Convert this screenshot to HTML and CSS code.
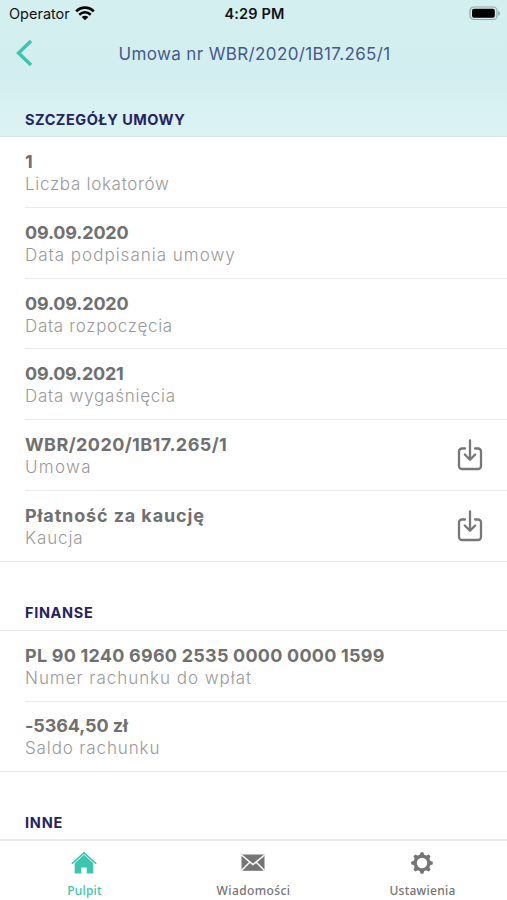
FILE: index.html
```html
<!DOCTYPE html>
<html lang="pl">
<head>
<meta charset="utf-8">
<title>Umowa</title>
<link rel="stylesheet" href="styles.css">
</head>
<body>
<div class="app">
  <header class="top">
    <div class="status">
      <div class="carrier"><span class="operator">Operator</span>
        <svg class="wifi" width="20" height="15" viewBox="0 0 20 15" fill="none" stroke="#000" stroke-width="2.6"><path d="M1.2 5.4C6.2.4 13.800.4 18.800 5.400M4.300 8.700C7.600 5.500 12.400 5.500 15.700 8.700"/><path d="M10 14.200 6.700 11C8.600 9.300 11.400 9.300 13.300 11Z" fill="#000" stroke="none"/></svg>
      </div>
      <span class="time">4:29 PM</span>
      <svg class="battery" width="31" height="15" viewBox="0 0 31 15"><rect x="1" y="1" width="27" height="12.500" rx="3.800" fill="none" stroke="#93a8a8" stroke-width="1.200"/><rect x="3" y="2.800" width="22.800" height="9" rx="2" fill="#000"/><path d="M29.300 5v4.800c2-.7 2-4.100 0-4.800Z" fill="#84999a"/></svg>
    </div>
    <div class="nav">
      <svg class="back" width="18" height="28" viewBox="0 0 18 28" fill="none" stroke="#3cc6ae" stroke-width="3.400"><path d="M15 2 2.500 14 15 26"/></svg>
      <h1><span class="title">Umowa nr WBR/2020/1B17.265/1</span></h1>
    </div>
    <h2><span class="s1">SZCZEGÓŁY UMOWY</span></h2>
  </header>
  <main>
    <section class="list">
      <div class="row"><div><b class="v1">1</b><p class="l1">Liczba lokatorów</p></div></div>
      <div class="row"><div><b class="date">09.09.2020</b><p class="l2">Data podpisania umowy</p></div></div>
      <div class="row"><div><b class="date">09.09.2020</b><p class="l3">Data rozpoczęcia</p></div></div>
      <div class="row"><div><b class="date last-date">09.09.2021</b><p class="l4">Data wygaśnięcia</p></div></div>
      <div class="row"><div><b class="v5">WBR/2020/1B17.265/1</b><p class="l5">Umowa</p></div>
        <svg class="save" width="26" height="32" viewBox="0 0 26 32" fill="none" stroke="#777" stroke-width="2.300" stroke-linecap="round" stroke-linejoin="round"><path d="M8 9.500H5a3 3 0 0 0-3 3V27a3 3 0 0 0 3 3h16a3 3 0 0 0 3-3V12.500a3 3 0 0 0-3-3h-3M13 1.500v19M7.800 15.500l5.200 5.300 5.200-5.300"/></svg></div>
      <div class="row"><div><b class="v6">Płatność za kaucję</b><p class="l6">Kaucja</p></div>
        <svg class="save" width="26" height="32" viewBox="0 0 26 32" fill="none" stroke="#777" stroke-width="2.300" stroke-linecap="round" stroke-linejoin="round"><path d="M8 9.500H5a3 3 0 0 0-3 3V27a3 3 0 0 0 3 3h16a3 3 0 0 0 3-3V12.500a3 3 0 0 0-3-3h-3M13 1.500v19M7.800 15.500l5.200 5.300 5.200-5.300"/></svg></div>
    </section>
    <h2 class="mid"><span class="s2">FINANSE</span></h2>
    <section class="list">
      <div class="row"><div><b class="v7">PL 90 1240 6960 2535 0000 0000 1599</b><p class="l7">Numer rachunku do wpłat</p></div></div>
      <div class="row"><div><b class="v8">-5364,50 zł</b><p class="l8">Saldo rachunku</p></div></div>
    </section>
    <h2 class="end"><span class="s3">INNE</span></h2>
  </main>
  <nav class="tabs">
    <div class="tab active">
      <svg width="26" height="24" viewBox="0 0 26 24" fill="currentColor"><path d="M13 .8.300 12.200 1.500 13.300 13 3l11.500 10.300 1.200-1.100Z"/><path d="m13 3.800 9.300 8.500v10.100h-6.600v-6h-5.400v6H3.700V12.300Z"/></svg>
      <span class="t1">Pulpit</span>
    </div>
    <div class="tab">
      <svg width="26" height="24" viewBox="0 0 26 24"><path d="M1.500 3.500h23v16.300h-23Z" fill="#757575"/><path d="m1.500 4 11.500 9.500L24.500 4M1.500 19.500l8.200-8.200m14.800 8.200-8.200-8.200" fill="none" stroke="#fff" stroke-width="1.500"/></svg>
      <span class="t2">Wiadomości</span>
    </div>
    <div class="tab">
      <svg width="26" height="24" viewBox="-13 -12 26 24"><g fill="#757575"><path id="t" d="M-2.300-8-1.300-10.800h2.600L2.300-8V8L1.300 10.800h-2.600L-2.300 8Z"/><use href="#t" transform="rotate(45)"/><use href="#t" transform="rotate(90)"/><use href="#t" transform="rotate(135)"/><circle r="8.500"/></g><circle r="5.200" fill="#fff"/></svg>
      <span class="t3">Ustawienia</span>
    </div>
  </nav>
</div>
</body>
</html>
```
FILE: styles.css
```css
* { box-sizing: border-box; }
body { margin: 0; background: #fff; font-family: Inter, "Open Sans", sans-serif; }
.app { width: 507px; height: 900px; display: flex; flex-direction: column; overflow: hidden; }
h1, h2, p { margin: 0; font-size: inherit; }
svg { display: block; flex: none; }

.top { height: 137px; display: flex; flex-direction: column; background: linear-gradient(#d4efef 0, #d3eef0 55%, #dcf3f3 100%); border-bottom: 1px solid #dce5e5; }
.status { height: 28px; display: grid; grid-template-columns: 1fr auto 1fr; align-items: center; padding: 0 7px 2px 9px; color: #111; }
.carrier { display: flex; align-items: center; gap: 5px; }
.operator { font-size: 14.500px; }
.time { font-size: 14.500px; font-weight: 600; letter-spacing: .15px; }
.battery { justify-self: end; }
.nav { height: 52px; display: grid; grid-template-columns: 40px 1fr 40px; align-items: center; padding: 0 14px 2px 16px; }
h1 { font-size: 17px; font-weight: 400; color: #47598c; text-align: center; white-space: nowrap; padding-top: 1px; }
.title { letter-spacing: .37px; }
h2 { font-size: 14.500px; line-height: 20px; font-weight: 700; color: #252463; padding-left: 25px; }
.top h2 { margin-top: 30px; }
.s1 { letter-spacing: .5px; }
.s2 { letter-spacing: .65px; }
.s3 { letter-spacing: .8px; }

.list { border-bottom: 1px solid #e8e8e8; height: 425px; display: flex; flex-direction: column; }
.row { flex: 1; margin-left: 25px; padding: 2px 24px 0 0; display: flex; justify-content: space-between; align-items: center; border-bottom: 1px solid #ebebeb; white-space: nowrap; }
.row:last-child { border-bottom: 0; }
.row b { display: block; font-size: 18px; line-height: 22px; font-weight: 700; color: #707070; }
.row p { font-size: 17px; line-height: 22px; font-weight: 300; color: #999; }
.save { margin-bottom: 3px; }
.row .date { letter-spacing: -.15px; }
.row .last-date { letter-spacing: -.2px; }
.v5 { letter-spacing: .42px; }
.v6 { letter-spacing: .88px; }
.v7 { letter-spacing: .23px; }
.v8 { letter-spacing: -.1px; }
.l1 { letter-spacing: .7px; }
.l2 { letter-spacing: 1px; }
.l3 { letter-spacing: .68px; }
.l4 { letter-spacing: .75px; }
.l5 { letter-spacing: 1.300px; }
.l6 { letter-spacing: .9px; }
.l7 { letter-spacing: .97px; }
.l8 { letter-spacing: .87px; }
.mid { height: 69px; padding-top: 41px; border-bottom: 1px solid #e8e8e8; }
.mid + .list { height: 141px; }
.end { padding-top: 41px; }

.tabs { margin-top: auto; height: 61px; flex: none; display: grid; grid-template-columns: repeat(3, 1fr); border-top: 2px solid #ececec; background: #fff; color: #757575; }
.tab { display: flex; flex-direction: column; align-items: center; padding-top: 10px; gap: 8px; font: 500 12px/16px "Noto Sans", sans-serif; }
.tab svg { margin-right: 1px; }
.t1 { letter-spacing: .2px; }
.t2 { letter-spacing: .4px; }
.t3 { letter-spacing: .25px; }
.active { color: #3cc6b0; }
```
